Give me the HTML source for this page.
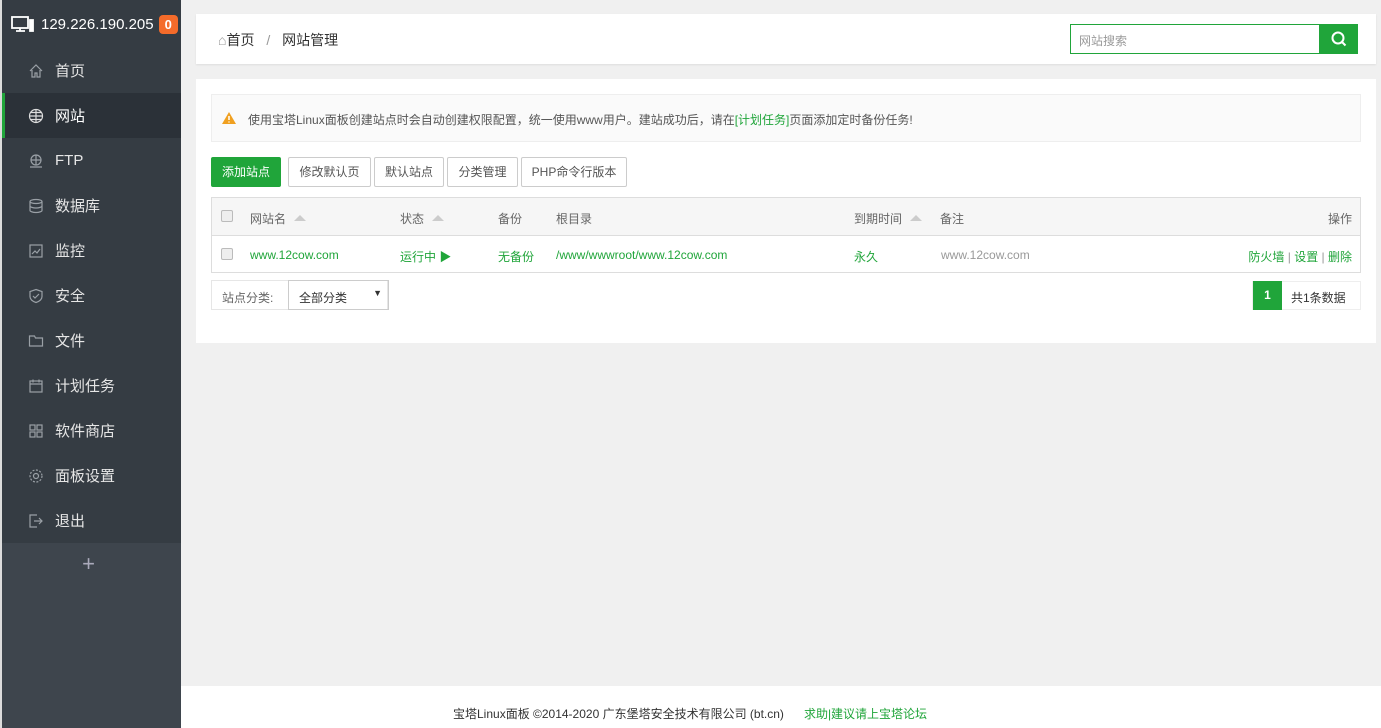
<!DOCTYPE html>
<html><head><meta charset="utf-8"><style>
*{margin:0;padding:0;box-sizing:border-box}
html,body{width:1381px;height:728px;overflow:hidden}
body{background:#f0f0f0;font-family:"Liberation Sans","Noto Sans CJK SC",sans-serif;font-size:12px;color:#666;position:relative}
.side{position:absolute;left:0;top:0;width:181px;height:728px;background:#3e454d;border-left:2px solid #dcdcdc}
.hd{height:48px;background:#353c43;color:#fff;font-size:15px;display:flex;align-items:center;padding-left:9px}
.badge{background:#f46b2a;color:#fff;border-radius:4px;font-size:13px;font-weight:bold;padding:2px 6px;margin-left:5px}
.menu{background:#353c43}
.mi{height:45px;display:flex;align-items:center;color:#e6e6e6;font-size:15px;padding-left:26px}
.mi svg{width:16px;height:16px;margin-right:11px;stroke:#9aa0a6;fill:none;stroke-width:1.2}
.mi.act{background:#2b3138;border-left:3px solid #20a53a;padding-left:23px;color:#fff}
.plus{height:42px;color:#aab;font-size:22px;text-align:center;line-height:42px;padding-right:6px}
.top{position:absolute;left:196px;top:14px;width:1180px;height:50px;background:#fff;box-shadow:0 1px 2px rgba(0,0,0,.08)}
.bc{position:absolute;left:22px;top:16px;font-size:14px;color:#333}
.srch{position:absolute;left:874px;top:10px;width:250px;height:30px;border:1px solid #20a53a;font-size:12px;color:#999;padding:7px 8px}
.sbtn{position:absolute;left:1124px;top:10px;width:38px;height:30px;background:#20a53a}
.main{position:absolute;left:196px;top:79px;width:1180px;height:264px;background:#fff}
.tip{position:absolute;left:15px;top:15px;width:1150px;height:48px;background:#fafafa;border:1px solid #eee;color:#555;padding:16px 0 0 36px}
.btn{position:absolute;top:78px;height:30px;border:1px solid #ccc;border-radius:2px;background:#fff;color:#555;line-height:28px;text-align:center;font-size:12px}
.tbl{position:absolute;left:15px;top:118px;width:1150px;height:76px;border:1px solid #ddd}
.th{height:38px;background:#f6f6f6;border-bottom:1px solid #ddd;position:relative;color:#666}
.tr{height:37px;position:relative;color:#20a53a}
.c{position:absolute;top:12px;white-space:nowrap}
.cb{position:absolute;left:9px;top:12px;width:12px;height:12px;border:1px solid #bbb;border-radius:2px;background:#eee}
.up{display:inline-block;width:0;height:0;border-left:6px solid transparent;border-right:6px solid transparent;border-bottom:6px solid #ccc;margin-left:8px;vertical-align:2px}
.foot{position:absolute;left:181px;top:686px;width:1200px;height:42px;background:#fff;color:#333;font-size:12px}
.foot span.t{position:absolute;left:272px;top:19px;white-space:nowrap}
</style></head><body>
<div class="side">
<div class="hd"><svg width="24" height="18" viewBox="0 0 24 18" fill="none" stroke="#fff" stroke-width="1.8"><rect x="1" y="2" width="16" height="11"/><path d="M5 16h9M9 13v3"/><rect x="19" y="5" width="3" height="11" fill="#fff"/></svg><span style="margin-left:6px">129.226.190.205</span><span class="badge">0</span></div>
<div class="menu">
<div class="mi"><svg viewBox="0 0 16 16"><path d="M2 8L8 2l6 6M4 7v7h3v-4h2v4h3V7"/></svg>首页</div>
<div class="mi act"><svg viewBox="0 0 16 16" style="stroke:#ddd"><circle cx="8" cy="8" r="6.5"/><path d="M1.5 8h13M8 1.5v13M3 4.5h10M3 11.5h10"/></svg>网站</div>
<div class="mi"><svg viewBox="0 0 16 16"><circle cx="8" cy="7" r="5"/><path d="M3 7h10M8 2v10M2 14h12"/></svg>FTP</div>
<div class="mi"><svg viewBox="0 0 16 16"><ellipse cx="8" cy="3.5" rx="6" ry="2"/><path d="M2 3.5v9c0 1 3 2 6 2s6-1 6-2v-9M2 8c0 1 3 2 6 2s6-1 6-2"/></svg>数据库</div>
<div class="mi"><svg viewBox="0 0 16 16"><rect x="2" y="2" width="12" height="12"/><path d="M4 11l3-3 2 2 3-4"/></svg>监控</div>
<div class="mi"><svg viewBox="0 0 16 16"><path d="M8 1.5l6 2v5c0 3-3 5-6 6-3-1-6-3-6-6v-5z"/><path d="M5 8l2 2 4-4"/></svg>安全</div>
<div class="mi"><svg viewBox="0 0 16 16"><path d="M1.5 3h5l1 2h7v8h-13z"/></svg>文件</div>
<div class="mi"><svg viewBox="0 0 16 16"><rect x="2" y="3" width="12" height="11"/><path d="M2 6h12M5 1.5v3M11 1.5v3"/></svg>计划任务</div>
<div class="mi"><svg viewBox="0 0 16 16"><rect x="2" y="2" width="5" height="5"/><rect x="9" y="2" width="5" height="5"/><rect x="2" y="9" width="5" height="5"/><rect x="9" y="9" width="5" height="5"/></svg>软件商店</div>
<div class="mi"><svg viewBox="0 0 16 16"><circle cx="8" cy="8" r="2.5"/><circle cx="8" cy="8" r="6" stroke-dasharray="2 1.5"/></svg>面板设置</div>
<div class="mi"><svg viewBox="0 0 16 16"><path d="M9 2H2v12h7M6 8h8M11 5l3 3-3 3"/></svg>退出</div>
</div>
<div class="plus">+</div>
</div>
<div class="top">
<div class="bc"><span style="color:#999">⌂</span>首页 <span style="color:#999;margin:0 8px">/</span> 网站管理</div>
<div class="srch">网站搜索</div>
<div class="sbtn"><svg width="38" height="30" viewBox="0 0 38 30" fill="none" stroke="#fff" stroke-width="2"><circle cx="18" cy="14" r="5.5"/><path d="M22 18l3.5 3.5"/></svg></div>
</div>
<div class="main">
<div class="tip"><svg style="position:absolute;left:10px;top:17px" width="14" height="12" viewBox="0 0 14 12"><path d="M7 0L14 12H0z" fill="#f0a020"/><path d="M7 4v4M7 9.5v1" stroke="#fff" stroke-width="1.5"/></svg>使用宝塔Linux面板创建站点时会自动创建权限配置，统一使用www用户。建站成功后，请在<span style="color:#20a53a">[计划任务]</span>页面添加定时备份任务!</div>
<div class="btn" style="left:15px;width:70px;background:#20a53a;border-color:#20a53a;color:#fff">添加站点</div>
<div class="btn" style="left:92px;width:83px">修改默认页</div>
<div class="btn" style="left:178px;width:70px">默认站点</div>
<div class="btn" style="left:251px;width:71px">分类管理</div>
<div class="btn" style="left:325px;width:106px">PHP命令行版本</div>
<div class="tbl">
<div class="th"><div class="cb"></div><span class="c" style="left:38px">网站名<span class="up"></span></span><span class="c" style="left:188px">状态<span class="up"></span></span><span class="c" style="left:286px">备份</span><span class="c" style="left:344px">根目录</span><span class="c" style="left:642px">到期时间<span class="up"></span></span><span class="c" style="left:728px">备注</span><span class="c" style="right:8px">操作</span></div>
<div class="tr"><div class="cb"></div><span class="c" style="left:38px">www.12cow.com</span><span class="c" style="left:188px">运行中 ▶</span><span class="c" style="left:286px">无备份</span><span class="c" style="left:344px">/www/wwwroot/www.12cow.com</span><span class="c" style="left:642px">永久</span><span class="c" style="left:729px;color:#999">www.12cow.com</span><span class="c" style="right:8px">防火墙 <span style="color:#999">|</span> 设置 <span style="color:#999">|</span> 删除</span></div>
</div>
<div style="position:absolute;left:15px;top:201px;width:177px;height:30px;border:1px solid #e6e6e6;font-size:12px"><span style="position:absolute;left:10px;top:8px">站点分类:</span><div style="position:absolute;left:76px;top:-1px;width:101px;height:30px;border:1px solid #ccc;color:#333;padding:8px 10px">全部分类<span style="position:absolute;right:6px;top:7px;font-size:9px">▼</span></div></div>
<div style="position:absolute;left:1056px;top:202px;width:109px;height:29px;border:1px solid #eee"><div style="position:absolute;left:0;top:-1px;width:29px;height:29px;background:#20a53a;color:#fff;text-align:center;line-height:29px;font-weight:bold">1</div><span style="position:absolute;left:38px;top:7px;color:#333">共1条数据</span></div>
</div>
<div class="foot"><span class="t">宝塔Linux面板 ©2014-2020 广东堡塔安全技术有限公司 (bt.cn)<span style="color:#20a53a;margin-left:20px">求助|建议请上宝塔论坛</span></span></div>
</body></html>
